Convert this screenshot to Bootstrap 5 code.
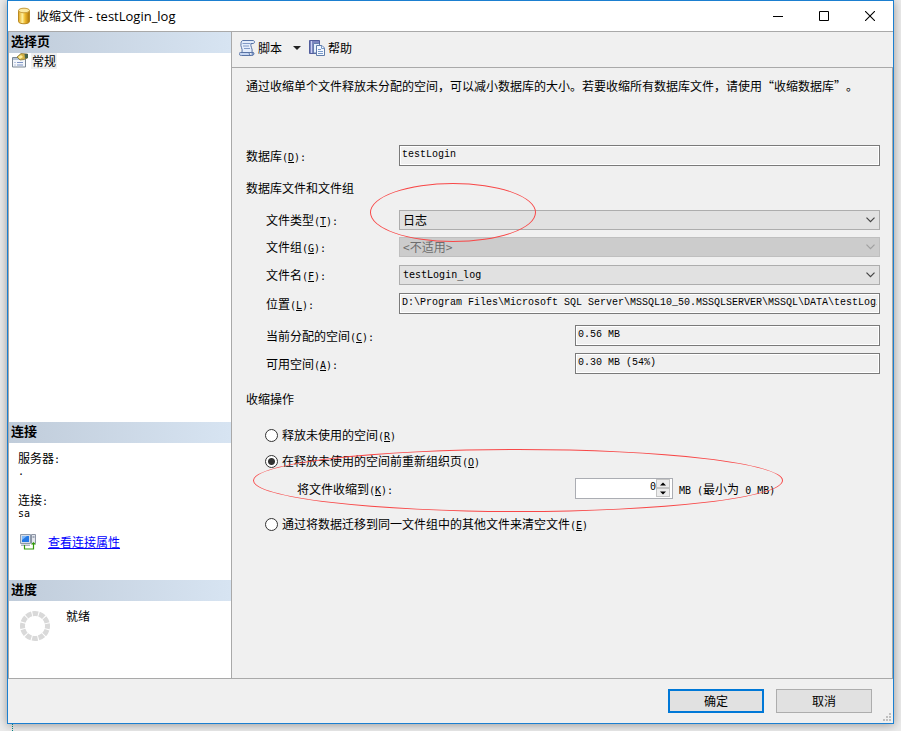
<!DOCTYPE html>
<html lang="zh-CN">
<head>
<meta charset="utf-8">
<meta name="viewport" content="width=device-width, initial-scale=1">
<title>收缩文件 - testLogin_log</title>
<link href="https://cdn.jsdelivr.net/npm/bootstrap@5.3.0/dist/css/bootstrap.min.css" rel="stylesheet">
<style>
body { background: #ebebeb; color: #000; font: 12px/18px "Noto Sans CJK SC", sans-serif; text-spacing-trim: space-all; }
button, input, select { font: inherit; color: inherit; }
svg { display: block; flex: none; }
.win { margin: 0 7px; border: 1px solid #1b7fd0; background: #f0f0f0; box-shadow: 0 1px 9px rgba(0,0,0,.35); }
.desk { height: 7px; }
.desk-mark { width: 1px; margin-left: 12px; border-left: 1px dotted #008080; }
.titlebar { height: 30px; padding-left: 9px; background: #fff; }
.titlebar h1 { font: 12px/18px "Noto Sans CJK SC", sans-serif; padding-left: 6px; }
.titlebar h1 span { font: 13px/18px "Open Sans", sans-serif; }
.sysbtn { width: 46px; height: 30px; border: 0; background: none; display: flex; align-items: center; justify-content: center; }
.work { border: solid #a9a9a9; border-width: 1px 0 1px 1px; }
.side { width: 223px; background: #fff; border-right: 1px solid #a9a9a9; }
.side h2 { font-size: 13px; line-height: 18px; font-weight: 700; padding: 0 2px 3px; background: linear-gradient(90deg, #c0ccda, #d7e4f2); }
.pages { height: 369px; padding: 0 3px; }
.conn { height: 137px; padding: 6px 9px; }
.conn dl { line-height: 18px; }
.conn dt { font-weight: 400; }
.conn dd { line-height: 10px; margin-bottom: 14px; }
.conn a { color: #00f; }
.prog { padding: 6px 11px; gap: 16px; }
.page-item-cur { background: #f0f0f0; padding: 0 1px; margin-left: 3px; line-height: 16px; }
.tools { height: 36px; padding: 0 7px 4px; border-bottom: 1px solid #a9a9a9; }
.tools button { border: 0; padding: 0; background: none; display: flex; align-items: center; gap: 3px; }
.sheet { padding: 9px 12px 0 14px; border-right: 1px solid #a9a9a9; }
.lat { font-family: "DejaVu Sans Mono", "Noto Sans CJK SC", monospace; font-size: 10px; line-height: 12px; }
.lbl { width: 153px; flex: none; }
.lbl.deep { width: 133px; }
.lbl.wide { width: 309px; }
.lbl.sub { width: 278px; }
.ind { padding-left: 20px; }
.ind-radio { padding-left: 19px; }
.ind-sub { padding-left: 51px; }
.g-xl { margin-top: 50px; } .g-l { margin-top: 18px; } .g-k { margin-top: 16px; } .g-m { margin-top: 13px; } .g-n { margin-top: 11px; } .g-s { margin-top: 8px; } .g-t { margin-top: 7px; }
.box { flex: 1; min-width: 0; height: 21px; border: 1px solid #7a7a7a; border-radius: 0; padding: 0 2px 2px; font-family: "Liberation Mono", monospace; line-height: 16px; background: #f0f0f0; box-shadow: inset 0 0 0 1px #fff; }
.drop { flex: 1; min-width: 0; height: 20px; min-height: 0; border: 1px solid #adadad; border-radius: 0; padding: 0 20px 0 3px; font-size: 12px; line-height: 18px; color: #000; background: #e1e1e1 url("data:image/svg+xml,%3Csvg xmlns='http://www.w3.org/2000/svg' width='9' height='6'%3E%3Cpath d='M.5.7l4 4 4-4' fill='none' stroke='%23444' stroke-width='1.2'/%3E%3C/svg%3E") no-repeat right 4px center / 9px 6px; }
.drop.lat { font-size: 10px; }
.drop.form-select:disabled { background-color: #ccc; border-color: #bfbfbf; color: #6d6d6d; opacity: 1; background-image: url("data:image/svg+xml,%3Csvg xmlns='http://www.w3.org/2000/svg' width='9' height='6'%3E%3Cpath d='M.5.7l4 4 4-4' fill='none' stroke='%23a0a0a0' stroke-width='1.2'/%3E%3C/svg%3E"); }
.opt { appearance: none; width: 13px; height: 13px; margin: 0 4px 0 0; flex: none; border: 1px solid #333; border-radius: 50%; background: #fff; }
.opt:checked { background: radial-gradient(circle, #333 3px, #fff 4px); }
.spin { width: 98px; height: 21px; border: 1px solid #abadb3; background: #fff; margin-right: 6px; }
.spin input { width: 80px; border: 0; padding: 0 0 3px; text-align: right; background: none; appearance: textfield; outline: 0; }
.spin input::-webkit-inner-spin-button { appearance: none; margin: 0; }
.spin button { width: 14px; height: 9px; border: 1px solid #c4c4c4; padding: 0; background: #ececec; display: flex; align-items: center; justify-content: center; }
.footer { height: 44px; padding: 0 21px; gap: 12px; }
.act { width: 96px; height: 24px; padding: 0; border: 1px solid #adadad; border-radius: 0; background: #e1e1e1; font-size: 12px; line-height: 20px; color: #000; }
.act-main { border: 2px solid #0078d7; }
.ring { position: absolute; pointer-events: none; border: 1px solid #f84848; border-radius: 50%; }
.ring-a { left: 138px; top: 115px; width: 166px; height: 59px; }
.ring-b { left: 21px; top: 381px; width: 530px; height: 63px; }
.grip { position: absolute; right: 2px; bottom: 2px; }
</style>
<script src="https://cdn.jsdelivr.net/npm/bootstrap@5.3.0/dist/js/bootstrap.bundle.min.js"></script>
</head>
<body class="d-flex flex-column min-vh-100">
<main class="win d-flex flex-column flex-grow-1">
  <header class="titlebar d-flex align-items-center">
    <svg width="14" height="18" viewBox="0 0 14 18"><defs><linearGradient id="gold"><stop stop-color="#e3a51c"/><stop offset=".35" stop-color="#fff1a0"/><stop offset=".6" stop-color="#efb92a"/><stop offset="1" stop-color="#a8720c"/></linearGradient></defs><path d="M1.500 3.500v11c0 3 11 3 11 0v-11z" fill="url(#gold)" stroke="#b98a22"/><ellipse cx="7" cy="3.500" rx="5.500" ry="2.300" fill="#fbe9a2" stroke="#c79b38"/></svg>
    <h1 class="mb-0 flex-grow-1">收缩文件<span> - testLogin_log</span></h1>
    <button class="sysbtn" aria-label="最小化"><svg width="10" height="10"><path d="M0 5.500h10" stroke="#000"/></svg></button>
    <button class="sysbtn" aria-label="最大化"><svg width="10" height="10"><path d="M.5.500h9v9h-9z" fill="none" stroke="#000"/></svg></button>
    <button class="sysbtn" aria-label="关闭"><svg width="10" height="10"><path d="M0 0l10 10M10 0L0 10" stroke="#000" stroke-width="1.100"/></svg></button>
  </header>

  <div class="work d-flex flex-grow-1">
    <aside class="side flex-shrink-0">
      <h2 class="mb-0">选择页</h2>
      <div class="pages">
        <div class="d-flex">
          <svg width="16" height="16" viewBox="0 0 16 16"><path d="M.5 4.500h13v9.500h-13z" fill="#f4f7fb" stroke="#7b8794"/><path d="M1 5h8v2H1z" fill="#b4c3d5"/><path d="M2.500 9.500h1M5 9.500h6M2.500 12h1M5 12h6" stroke="#7d93c4"/><path d="M5 4l4-3.500 6.500.5v4L12 6.500 8 7z" fill="#d4b143" stroke="#7c6a2a" stroke-width=".7"/><path d="M6 4l3-2 2 2-3 2z" fill="#ffef9a"/><path d="M12.500 1H16v4l-3 .5z" fill="#46634a"/></svg>
          <span class="page-item-cur">常规</span>
        </div>
      </div>
      <h2 class="mb-0">连接</h2>
      <div class="conn">
        <dl class="mb-0"><dt>服务器<span class="lat">:</span></dt><dd class="lat">.</dd><dt>连接<span class="lat">:</span></dt><dd class="lat">sa</dd></dl>
        <div class="d-flex align-items-center">
          <svg width="18" height="16" viewBox="-2 0 18 16"><path d="M.5.500h10v9H.5z" fill="#d4dce8" stroke="#8e9aaa"/><path d="M2 2h7v6H2z" fill="#2478e4"/><path d="M2 2h5L2 6z" fill="#7db8fa"/><path d="M1 10.500h9v1.500H1z" fill="#aab3c2"/><path d="M11.500.500h4v9h-4z" fill="#e4e7ee" stroke="#8d95a5"/><path d="M12.500 3h2" stroke="#5f6c84"/><path d="M4.500 11v4h9V9" fill="none" stroke="#329a08" stroke-width="1.200"/><path d="M11 10.500L13.500 8l2.500 2.500z" fill="#329a08"/></svg>
          <a class="ms-2 ps-1" href="#">查看连接属性</a>
        </div>
      </div>
      <h2 class="mb-0">进度</h2>
      <div class="prog d-flex">
        <svg class="mt-1" width="30" height="30" viewBox="0 0 30 30"><circle cx="15" cy="15" r="12.500" fill="none" stroke="#d9d9d9" stroke-width="5" stroke-dasharray="5.545 1" stroke-dashoffset="2.800"/></svg>
        <span>就绪</span>
      </div>
    </aside>

    <section class="flex-grow-1 d-flex flex-column">
      <div class="tools d-flex align-items-center">
        <button type="button"><svg width="16" height="16" viewBox="0 0 16 16"><path d="M4 .5h10c2 0 2 3 0 3h-2c-1 3 2 5 1 9H3c1-4-2-6-1-9 0-2 1-3 2-3z" fill="#e4edfb" stroke="#5873a5"/><path d="M3.500 3.500h8M4 6h6M5 8.500h6" stroke="#8199c6"/><path d="M1.500 12.500h9c-1 2 .5 3 2 3h-10c-3 0-3-3-1-3z" fill="#c6d6f2" stroke="#5873a5"/><path d="M12.500 15.500c2.500 0 3-2 2-3h-2" fill="#7f99cc" stroke="#5873a5"/></svg>脚本
          <svg class="ms-1" width="16" height="6"><path d="M4 1h8L8 5z" fill="#222"/></svg></button>
        <button type="button" class="ms-1"><svg width="16" height="16" viewBox="0 0 16 16"><path d="M.5.500h10v13H.5z" fill="#7d86c0" stroke="#515d9c"/><path d="M2.500 1v12" stroke="#c9cff1"/><path d="M4.500 3.500h5l2 2V13h-7z" fill="#e8f0fc" stroke="#6780ad"/><path d="M7.500 5.500H13l2.500 2.500v7.500h-8z" fill="#f5f9ff" stroke="#607ca9"/><path d="M12.500 5.500V8.500h3M9 9.500h3M9 11.500h5M9 13.500h5" fill="none" stroke="#799ac8"/></svg>帮助</button>
      </div>

      <form class="sheet position-relative flex-grow-1">
        <p class="mb-0">通过收缩单个文件释放未分配的空间，可以减小数据库的大小。若要收缩所有数据库文件，请使用“收缩数据库”。</p>
        <div class="d-flex align-items-center g-xl"><label class="lbl" for="db">数据库<span class="lat">(<u>D</u>):</span></label><input id="db" class="box lat" value="testLogin" readonly></div>
        <div class="g-m">数据库文件和文件组</div>
        <div class="ind">
          <div class="d-flex align-items-center g-m"><label class="lbl deep" for="type">文件类型<span class="lat">(<u>T</u>):</span></label><select id="type" class="form-select drop"><option>日志</option></select></div>
          <div class="d-flex align-items-center g-t"><label class="lbl deep" for="group">文件组<span class="lat">(<u>G</u>):</span></label><select id="group" class="form-select drop" disabled><option>&lt;不适用&gt;</option></select></div>
          <div class="d-flex align-items-center g-s"><label class="lbl deep" for="name">文件名<span class="lat">(<u>F</u>):</span></label><select id="name" class="form-select drop lat"><option>testLogin_log</option></select></div>
          <div class="d-flex align-items-center g-s"><label class="lbl deep" for="path">位置<span class="lat">(<u>L</u>):</span></label><input id="path" class="box lat" value="D:\Program Files\Microsoft SQL Server\MSSQL10_50.MSSQLSERVER\MSSQL\DATA\testLogin_log.ldf" readonly></div>
          <div class="d-flex align-items-center g-n"><label class="lbl wide" for="alloc">当前分配的空间<span class="lat">(<u>C</u>):</span></label><input id="alloc" class="box lat" value="0.56 MB" readonly></div>
          <div class="d-flex align-items-center g-t"><label class="lbl wide" for="free">可用空间<span class="lat">(<u>A</u>):</span></label><input id="free" class="box lat" value="0.30 MB (54%)" readonly></div>
        </div>
        <div class="g-k">收缩操作</div>
        <div class="ind-radio d-flex align-items-center g-l"><input class="opt" type="radio" name="mode" id="r1"><label for="r1">释放未使用的空间<span class="lat">(<u>R</u>)</span></label></div>
        <div class="ind-radio d-flex align-items-center g-s"><input class="opt" type="radio" name="mode" id="r2" checked><label for="r2">在释放未使用的空间前重新组织页<span class="lat">(<u>O</u>)</span></label></div>
        <div class="ind-sub d-flex align-items-center g-s"><label class="lbl sub" for="size">将文件收缩到<span class="lat">(<u>K</u>):</span></label>
          <div class="spin d-flex"><input id="size" class="lat" type="number" value="0" min="0"><div class="d-flex flex-column"><button type="button" aria-label="增加"><svg width="6" height="4"><path d="M0 3.500h6L3 .5z"/></svg></button><button type="button" aria-label="减少"><svg width="6" height="4"><path d="M0 .5h6L3 3.500z"/></svg></button></div></div>
          <span><span class="lat">MB (</span>最小为<span class="lat"> 0 MB)</span></span></div>
        <div class="ind-radio d-flex align-items-center g-k"><input class="opt" type="radio" name="mode" id="r3"><label for="r3">通过将数据迁移到同一文件组中的其他文件来清空文件<span class="lat">(<u>E</u>)</span></label></div>
        <div class="ring ring-a"></div>
        <div class="ring ring-b"></div>
      </form>
    </section>
  </div>

  <footer class="footer position-relative d-flex align-items-center justify-content-end">
    <button type="button" class="btn act act-main">确定</button>
    <button type="button" class="btn act">取消</button>
    <svg class="grip" width="8" height="8" fill="#bfbfbf"><path d="M6 0h2v2H6zM3 3h2v2H3zM6 3h2v2H6zM0 6h2v2H0zM3 6h2v2H3zM6 6h2v2H6z"/></svg>
  </footer>
</main>
<div class="desk d-flex"><span class="desk-mark"></span></div>
</body>
</html>
